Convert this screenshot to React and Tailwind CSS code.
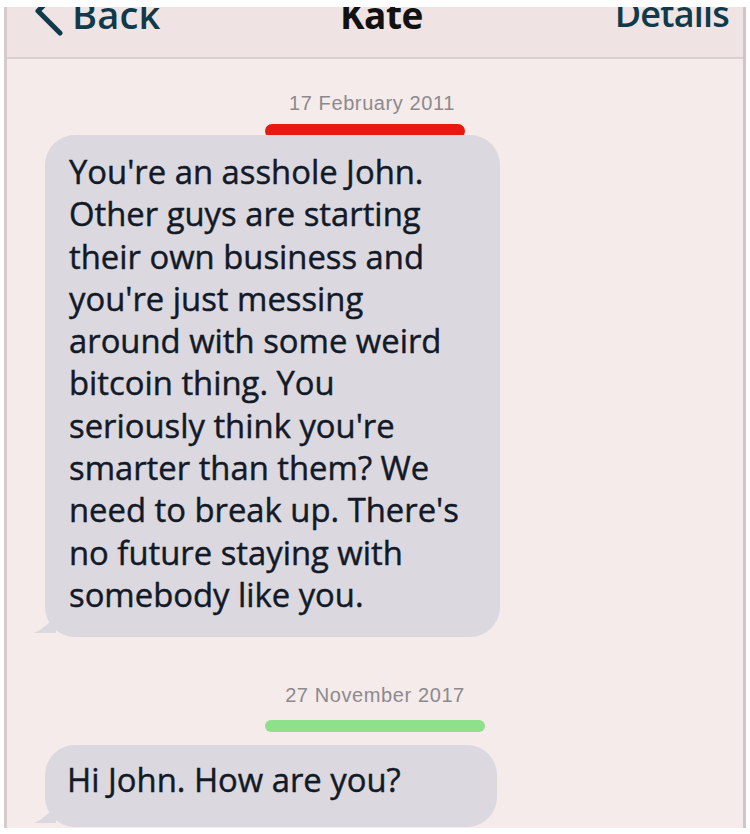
function Bubble({ lines, className = '' }) {
  return (
    <div className={`relative self-start rounded-[30px] bg-[#dcd8e0] ${className}`}>
      <p className="text-[32.8px] leading-[42.3px] text-[#121a27] [-webkit-text-stroke:0.45px_#121a27]">
        {lines.map((l, i) => (
          <span key={i} className="block whitespace-nowrap">
            {l}
          </span>
        ))}
      </p>
      {/* tail */}
      <svg
        className="absolute -left-[11px] bottom-[2px]"
        width="22"
        height="22"
        viewBox="0 0 22 22"
      >
        <path d="M22 0 L22 20 L0 20 Q14 14 22 0 Z" fill="#dcd8e0" />
      </svg>
    </div>
  );
}

function DateMark({ text, className = '', bar }) {
  return (
    <div className={`flex flex-col items-center ${className}`}>
      <span className="text-[20px] leading-[23px] tracking-[0.6px] text-[#8c8a8d] [font-family:'Liberation_Sans',Arial,sans-serif]">
        {text}
      </span>
      <div className={`rounded-full ${bar}`} />
    </div>
  );
}

export default function App() {
  return (
    <div className="min-h-[834px] w-[750px] overflow-hidden bg-white pt-[7px] [font-family:'Open_Sans',sans-serif]">
      <div className="mx-[4px] flex h-[821px] flex-col border-x-[3px] border-l-[#d4cccc] border-r-[#cfc6c7] bg-[#f5ebeb]">
        {/* header, photographed with its top cut off */}
        <div className="h-[52px] shrink-0 overflow-hidden border-b-2 border-[#ddcfcf] bg-[#f0e3e3]">
          <div className="-mt-[24px] flex h-[62px] items-center pl-[24px] pr-[14px]">
            <div className="flex h-full w-[309px] items-center text-[#0f3a4c]">
              <svg className="mt-[3px] self-start" width="32" height="50" viewBox="0 0 32 50" fill="none">
                <path d="M29 3 L7 25 L29 47" stroke="#0f3a4c" strokeWidth="5" strokeLinecap="round" strokeLinejoin="round" />
              </svg>
              <span className="ml-[9px] text-[38px] font-semibold leading-none tracking-[0.2px]">Back</span>
            </div>
            <span className="text-[37px] font-bold leading-none tracking-[-0.5px] text-[#111]">Kate</span>
            <span className="ml-auto text-[36px] font-semibold leading-none tracking-[-0.8px] text-[#0f3a4c]">
              Details
            </span>
          </div>
        </div>

        {/* messages */}
        <div className="flex flex-col">
          <DateMark text="17 February  2011" className="mt-[33px] -ml-[6px]" bar="mt-[9px] h-[14px] w-[200px] -ml-[14px] bg-[#e8190f]" />
          <Bubble
            className="-mt-[3px] ml-[38px] w-[455px] pt-[16px] pb-[21px] pl-[24px]"
            lines={[
              "You're an asshole John.",
              'Other guys are starting',
              'their own business and',
              "you're just messing",
              'around with some weird',
              'bitcoin thing. You',
              "seriously think you're",
              'smarter than them? We',
              "need to break up. There's",
              'no future staying with',
              'somebody like you.',
            ]}
          />
          <DateMark text="27 November 2017" className="mt-[47px]" bar="mt-[13px] h-[12px] w-[220px] bg-[#8ee08b]" />
          <Bubble className="mt-[13px] ml-[38px] w-[452px] pt-[14px] pb-[25px] pl-[22px]" lines={['Hi John. How are you?']} />
        </div>
      </div>
    </div>
  );
}
